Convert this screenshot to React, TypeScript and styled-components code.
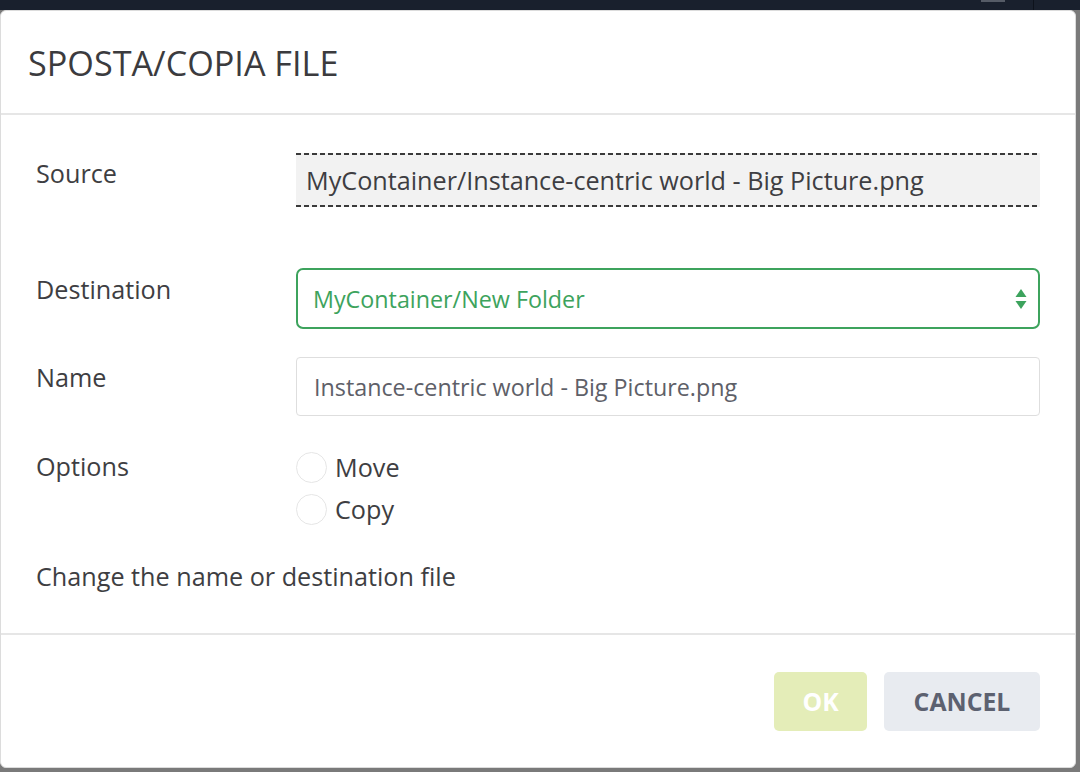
import React from 'react';
import styled, { createGlobalStyle } from 'styled-components';

const GlobalStyle = createGlobalStyle`
  html, body {
    margin: 0;
    padding: 0;
    background: #7a7a7a;
    font-family: "Open Sans", "Noto Sans", sans-serif;
    overflow: hidden;
  }
  * { box-sizing: border-box; }
`;

const Page = styled.div`
  width: 1080px;
  height: 772px;
  display: flex;
  flex-direction: column;
`;

const TopBar = styled.div`
  height: 10px;
  flex-shrink: 0;
  background: #19202d;
  display: flex;
  justify-content: flex-end;
  align-items: flex-start;
`;

const TopBarTab = styled.div`
  width: 24px;
  height: 2px;
  margin-right: 28px;
  background: #555b66;
`;

const TopBarSep = styled.div`
  width: 1px;
  height: 10px;
  margin-right: 46px;
  background: #0d121b;
`;

const Modal = styled.div`
  width: 1076px;
  height: 758px;
  background: #fff;
  border-radius: 6px;
  border: 1px solid #dcdcdc;
  display: flex;
  flex-direction: column;
`;

const Header = styled.div`
  height: 104px;
  flex-shrink: 0;
  display: flex;
  align-items: center;
  padding-left: 27px;
  border-bottom: 2px solid #e6e6e6;
`;

const Title = styled.h2`
  margin: 0;
  font-weight: 400;
  font-size: 34.2px;
  color: #3b3b3e;
`;

const Body = styled.div`
  flex: 1;
  padding: 38px 35px 0 35px;
  display: flex;
  flex-direction: column;
`;

const Row = styled.div<{ $gap: number }>`
  display: grid;
  grid-template-columns: 260px 1fr;
  margin-bottom: ${p => p.$gap}px;
`;

const Label = styled.div<{ $line: number }>`
  font-size: 25.2px;
  line-height: ${p => p.$line}px;
  color: #3e3e42;
`;

const SourceBox = styled.div`
  height: 54px;
  display: flex;
  align-items: center;
  padding-left: 10px;
  font-size: 25.2px;
  color: #3e3e42;
  white-space: nowrap;
  background:
    linear-gradient(to right, #3a3a3a 5px, transparent 5px) left top / 8px 2px repeat-x,
    linear-gradient(to right, #3a3a3a 5px, transparent 5px) left bottom / 8px 2px repeat-x,
    #f2f2f2;
`;

const Select = styled.div`
  height: 61px;
  border: 2px solid #3da35d;
  border-radius: 7px;
  display: flex;
  align-items: center;
  justify-content: space-between;
  padding: 0 10px 0 15px;
  font-size: 23.3px;
  color: #3da35d;
`;

const Input = styled.div`
  height: 59px;
  border: 1px solid #dedede;
  border-radius: 4px;
  display: flex;
  align-items: center;
  padding-left: 17px;
  font-size: 23.3px;
  color: #5e6068;
`;

const RadioList = styled.div`
  display: flex;
  flex-direction: column;
  gap: 12px;
`;

const RadioItem = styled.label`
  display: flex;
  align-items: center;
  gap: 8px;
  height: 30px;
  font-size: 25.2px;
  color: #3e3e42;
`;

const Circle = styled.span`
  width: 31px;
  height: 31px;
  border-radius: 50%;
  border: 1.5px solid #e6e6e6;
  background: #fff;
`;

const Help = styled.p`
  margin: 0;
  font-size: 25.2px;
  line-height: 30px;
  color: #3e3e42;
`;

const Footer = styled.div`
  height: 134px;
  flex-shrink: 0;
  border-top: 2px solid #e6e6e6;
  display: flex;
  justify-content: flex-end;
  align-items: center;
  gap: 17px;
  padding-right: 35px;
`;

const Button = styled.button<{ $variant: 'ok' | 'cancel' }>`
  height: 59px;
  border: none;
  border-radius: 5px;
  font-family: "Open Sans", "Noto Sans", sans-serif;
  font-weight: 700;
  font-size: 24.8px;
  width: ${p => (p.$variant === 'ok' ? 93 : 156)}px;
  background: ${p => (p.$variant === 'ok' ? '#e4edb8' : '#e8ebf0')};
  color: ${p => (p.$variant === 'ok' ? '#ffffff' : '#5c6170')};
`;

const Arrows = () => (
  <svg width="14" height="24" viewBox="0 0 14 24">
    <polygon points="7,2 12.5,10 1.5,10" fill="#3da35d" />
    <polygon points="1.5,14 12.5,14 7,22" fill="#3da35d" />
  </svg>
);

export default function App() {
  return (
    <Page>
      <GlobalStyle />
      <TopBar>
        <TopBarTab />
        <TopBarSep />
      </TopBar>
      <Modal>
        <Header>
          <Title>SPOSTA/COPIA FILE</Title>
        </Header>
        <Body>
          <Row $gap={61}>
            <Label $line={40}>Source</Label>
            <SourceBox>MyContainer/Instance-centric world - Big Picture.png</SourceBox>
          </Row>
          <Row $gap={28}>
            <Label $line={42}>Destination</Label>
            <Select>
              <span>MyContainer/New Folder</span>
              <Arrows />
            </Select>
          </Row>
          <Row $gap={36}>
            <Label $line={40}>Name</Label>
            <Input>Instance-centric world - Big Picture.png</Input>
          </Row>
          <Row $gap={37}>
            <Label $line={28}>Options</Label>
            <RadioList>
              <RadioItem><Circle />Move</RadioItem>
              <RadioItem><Circle />Copy</RadioItem>
            </RadioList>
          </Row>
          <Help>Change the name or destination file</Help>
        </Body>
        <Footer>
          <Button $variant="ok">OK</Button>
          <Button $variant="cancel">CANCEL</Button>
        </Footer>
      </Modal>
    </Page>
  );
}
